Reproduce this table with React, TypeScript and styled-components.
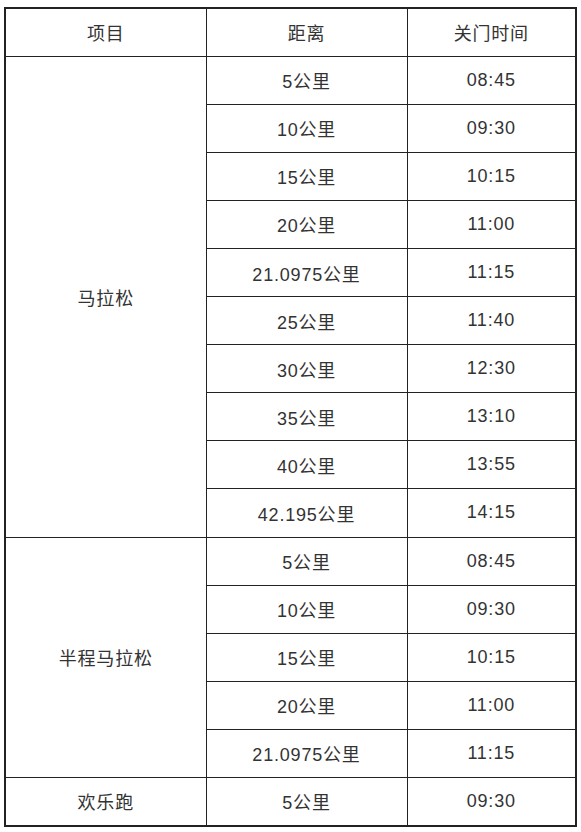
import React from "react";
import styled, { createGlobalStyle } from "styled-components";

const GlobalStyle = createGlobalStyle`
  html, body {
    margin: 0;
    padding: 0;
    background: #fff;
  }
  body {
    font-family: "Liberation Sans", "Noto Sans CJK SC", sans-serif;
    color: #333;
  }
`;

type Group = {
  name: string;
  rows: [string, string][];
};

const groups: Group[] = [
  {
    name: "马拉松",
    rows: [
      ["5公里", "08:45"],
      ["10公里", "09:30"],
      ["15公里", "10:15"],
      ["20公里", "11:00"],
      ["21.0975公里", "11:15"],
      ["25公里", "11:40"],
      ["30公里", "12:30"],
      ["35公里", "13:10"],
      ["40公里", "13:55"],
      ["42.195公里", "14:15"],
    ],
  },
  {
    name: "半程马拉松",
    rows: [
      ["5公里", "08:45"],
      ["10公里", "09:30"],
      ["15公里", "10:15"],
      ["20公里", "11:00"],
      ["21.0975公里", "11:15"],
    ],
  },
  {
    name: "欢乐跑",
    rows: [["5公里", "09:30"]],
  },
];

export default function App() {
  return (
    <>
      <GlobalStyle />
      <Wrap>
        <Table>
          <colgroup>
            <Col $w={201} />
            <Col $w={201} />
            <Col $w={169} />
          </colgroup>
          <thead>
            <Row>
              <Cell as="th">项目</Cell>
              <Cell as="th">距离</Cell>
              <Cell as="th">关门时间</Cell>
            </Row>
          </thead>
          <tbody>
            {groups.map((g) =>
              g.rows.map((r, i) => (
                <Row key={g.name + i}>
                  {i === 0 && <Cell rowSpan={g.rows.length}>{g.name}</Cell>}
                  <Cell>{r[0]}</Cell>
                  <Cell>{r[1]}</Cell>
                </Row>
              ))
            )}
          </tbody>
        </Table>
      </Wrap>
    </>
  );
}

const Wrap = styled.div`
  padding: 7px 0 0 4px;
`;

const Table = styled.table`
  border-collapse: collapse;
  table-layout: fixed;
  width: 571px;
  border: 2px solid #222;
`;

const Col = styled.col<{ $w: number }>`
  width: ${(p) => p.$w}px;
`;

const Row = styled.tr`
  height: 48.1px;
`;

const Cell = styled.td`
  border: 1.5px solid #222;
  padding: 0;
  text-align: center;
  vertical-align: middle;
  font-size: 18px;
  font-weight: normal;
  letter-spacing: 0.8px;
  color: #333;
`;
